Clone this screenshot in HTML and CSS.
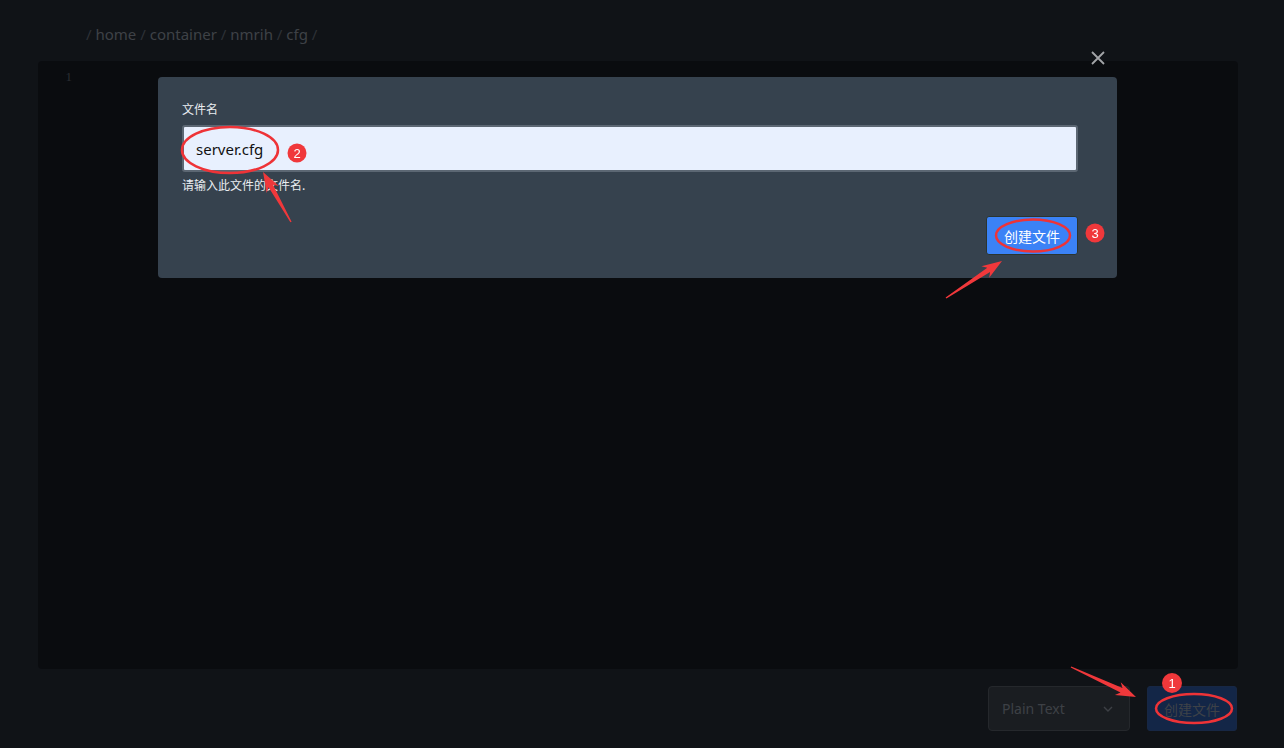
FILE: index.html
```html
<!DOCTYPE html>
<html lang="zh-CN">
<head>
    <meta charset="UTF-8">
    <meta name="viewport" content="width=device-width, initial-scale=1.0">
    <title>文件编辑</title>

    <link rel="stylesheet" href="styles.css">
</head>
<body>
    <div class="page">
        <div class="breadcrumb">
            <span class="sep">/</span> home <span class="sep">/</span> container <span class="sep">/</span> nmrih <span class="sep">/</span> cfg <span class="sep">/</span>
        </div>
        <div class="editor">
            <div class="gutter">1</div>
            <div class="code"></div>
        </div>
        <div class="footer">
            <div class="select">
                <span>Plain Text</span>
                <svg class="chevron" width="10" height="6" viewBox="0 0 10 6"><path d="M1 1l4 4 4-4" fill="none" stroke="currentColor" stroke-width="1.4"/></svg>
            </div>
            <button class="btn-create dim">创建文件</button>
        </div>
    </div>

    <div class="backdrop">
        <div class="modal">
            <button class="close" aria-label="close">
                <svg width="16" height="16" viewBox="0 0 16 16"><path d="M2 2l12 12M14 2L2 14" stroke="currentColor" stroke-width="1.8"/></svg>
            </button>
            <label class="field-label">文件名</label>
            <input type="text" class="field-input" value="server.cfg">
            <p class="field-hint">请输入此文件的文件名.</p>
            <div class="modal-actions">
                <button class="btn-create">创建文件</button>
            </div>
        </div>
    </div>

    <!-- annotations -->
    <svg class="marks" width="1284" height="748" viewBox="0 0 1284 748">
        <g fill="none" stroke="#ee3337" stroke-width="2.5">
            <ellipse cx="230" cy="150" rx="48" ry="23"/>
            <ellipse cx="1033" cy="235.5" rx="37" ry="16"/>
            <ellipse cx="1194" cy="708.5" rx="38" ry="14.5"/>
        </g>
        <g fill="#f0383b">
            <polygon points="291.6,221.7 273.0,184.8 278.9,186.1 263,172 266.7,192.9 268.6,187.2 290.4,222.3"/>
            <polygon points="946.4,298.6 990.1,271.9 989.2,277.8 1002,261 981.4,266.2 987.3,267.7 945.6,297.4"/>
            <polygon points="1070.7,667.6 1120.5,692.6 1114.9,695.0 1136,697 1120.7,682.2 1122.5,688.0 1071.3,666.4"/>
            <circle cx="297" cy="153" r="9.5"/>
            <circle cx="1095" cy="233" r="9.5"/>
            <circle cx="1172" cy="683" r="10"/>
        </g>
        <g fill="#fff" font-family="'Liberation Sans', Arial, sans-serif" font-size="13" text-anchor="middle">
            <text x="297" y="157.5">2</text>
            <text x="1095" y="237.5">3</text>
            <text x="1172" y="687.5">1</text>
        </g>
    </svg>
</body>
</html>
```

FILE: styles.css
```css
* {
    margin: 0;
    padding: 0;
    box-sizing: border-box;
}

body {
    font-family: 'Noto Sans', 'Noto Sans CJK SC', sans-serif;
    background: #20262f;
    width: 1284px;
    height: 748px;
    overflow: hidden;
}

.page {
    padding: 0 46px 0 38px;
}

.breadcrumb {
    height: 61px;
    padding: 24px 0 0 48px;
    font-size: 15px;
    line-height: 20px;
    color: #7c838d;
}

.breadcrumb .sep {
    color: #5a616b;
}

.editor {
    display: flex;
    height: 608px;
    background: #15191f;
    border-radius: 4px;
}

.gutter {
    width: 34px;
    padding-top: 8px;
    text-align: right;
    font-family: 'Liberation Serif', serif;
    font-size: 13px;
    color: #555b63;
}

.footer {
    display: flex;
    justify-content: flex-end;
    gap: 17px;
    margin-top: 17px;
    margin-right: 1px;
}

.select {
    display: flex;
    align-items: center;
    justify-content: space-between;
    width: 142px;
    height: 45px;
    padding: 0 16px 0 13px;
    background: #343a42;
    border: 1px solid #4a5159;
    border-radius: 4px;
    font-size: 14px;
    color: #7a818b;
}

.chevron {
    color: #7a818b;
}

.btn-create {
    height: 39px;
    padding: 0 17px;
    font-family: 'Noto Sans CJK SC', sans-serif;
    font-size: 14px;
    color: #fff;
    background: #3b82f6;
    border: 1px solid #2b3530;
    border-radius: 3px;
}

.btn-create.dim {
    width: 90px;
    height: 45px;
    padding: 0 12px;
    background: #264c8f;
    border-color: #2f4f88;
    color: #7b8390;
}

.backdrop {
    position: fixed;
    inset: 0;
    background: rgba(0, 0, 0, 0.5);
    padding: 77px 0 0 158px;
}

.modal {
    position: relative;
    width: 959px;
    height: 201px;
    padding: 24px 39px 0 24px;
    background: #36424e;
    border-radius: 4px;
    display: flex;
    flex-direction: column;
}

.close {
    position: absolute;
    top: -27px;
    right: 11px;
    width: 16px;
    height: 16px;
    background: none;
    border: 0;
    color: #a3a5a8;
}

.field-label {
    font-size: 12px;
    line-height: 16px;
    color: #e9edf1;
    font-family: 'Noto Sans CJK SC', sans-serif;
}

.field-input {
    margin-top: 8px;
    height: 47px;
    padding: 0 12px;
    font-family: 'Noto Sans', 'Noto Sans CJK SC', sans-serif;
    font-size: 15px;
    color: #111;
    background: #e8f0fe;
    border: 2px solid #5c6773;
    border-radius: 3px;
    outline: 0;
}

.field-hint {
    margin-top: 5px;
    font-family: 'Noto Sans CJK SC', sans-serif;
    font-size: 12px;
    line-height: 16px;
    color: #e9edf1;
}

.modal-actions {
    display: flex;
    justify-content: flex-end;
    margin-top: 23px;
}

.marks {
    position: absolute;
    top: 0;
    left: 0;
    pointer-events: none;
}
```
